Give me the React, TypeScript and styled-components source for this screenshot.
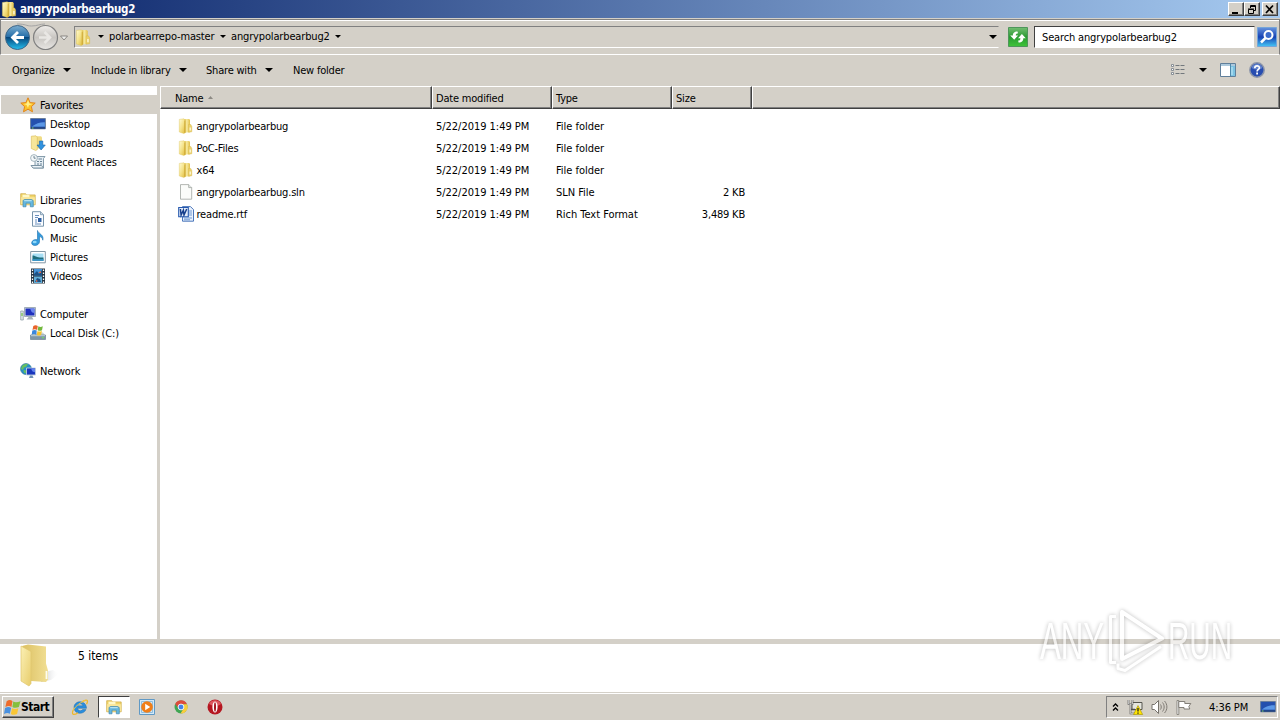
import React from 'react'
import styled, { createGlobalStyle } from 'styled-components'

interface FileEntry {
    name: string;
    type: string;
    size?: string;
    icon: React.ReactNode;
}

interface PlaceEntry {
    label: string;
    icon: React.ReactNode;
    root?: boolean;
    selected?: boolean;
    gap?: boolean;
}

const FolderIcon = ({ size = 16 }: { size?: number }) => (
    <svg width={size} height={size} viewBox="0 0 16 16">
        <defs>
            <linearGradient id="folderFront" x1="0" y1="0" x2="1" y2="1">
                <stop offset="0" stopColor="#fffad2" />
                <stop offset=".5" stopColor="#f4e288" />
                <stop offset="1" stopColor="#dfb93a" />
            </linearGradient>
            <linearGradient id="folderBack" x1="0" y1="0" x2="1" y2="0">
                <stop offset="0" stopColor="#d8b33c" />
                <stop offset=".5" stopColor="#f7eaa0" />
                <stop offset="1" stopColor="#e2c04a" />
            </linearGradient>
        </defs>
        <path d="M5.500 1h5.700l.8 1v12.200l-6.500.5z" fill="url(#folderBack)" />
        <path d="M10.500 6.500h2.300l1 2v5.300l-3.300.5z" fill="#ecd16a" stroke="#d5b54a" strokeWidth=".4" />
        <path d="M11.600 9.400h1.200v3h-1.200z" fill="#fffde8" />
        <path d="M1.300 1.400 6 .8l1.300 1.300v12.700l-1.500.7-4.500-1.500z" fill="url(#folderFront)" stroke="#dcc052" strokeWidth=".4" />
        <path d="M6.800 2.400v12.300" stroke="#c8a02c" strokeWidth=".8" />
    </svg>
)

const BigFolderIcon = () => (
    <svg width="40" height="44" viewBox="0 0 40 44">
        <defs>
            <linearGradient id="bigFront" x1="0" y1="0" x2="1" y2="1">
                <stop offset="0" stopColor="#fbf0b5" />
                <stop offset="1" stopColor="#e8cd6c" />
            </linearGradient>
            <linearGradient id="bigBack" x1="0" y1="0" x2="1" y2="0">
                <stop offset="0" stopColor="#dcc062" />
                <stop offset="1" stopColor="#f1df94" />
            </linearGradient>
            <linearGradient id="bigShade" x1="0" y1="0" x2="1" y2="0">
                <stop offset="0" stopColor="#8f9499" stopOpacity=".6" />
                <stop offset="1" stopColor="#ffffff" stopOpacity="0" />
            </linearGradient>
        </defs>
        <path d="m25 28 8-2 6 4-8 6-10 2z" fill="url(#bigShade)" />
        <path d="M2 2 8 .500 26 2.500v17l2 7v9l-2 2.500-15-1z" fill="url(#bigBack)" />
        <path d="M26.500 27v8" stroke="#fdfdf0" strokeWidth="1.800" />
        <path d="m1 2 10 5.500v32L9 42l-8-5z" fill="url(#bigFront)" stroke="#e0c66e" strokeWidth=".7" />
    </svg>
)

const StarIcon = () => (
    <svg width="16" height="16" viewBox="0 0 16 16">
        <path d="m8 .8 2.100 4.800 5.100.5-3.800 3.500 1.100 5.200L8 12.200l-4.500 2.600 1.100-5.200L.8 6.100l5.100-.5z" fill="#fcc22a" stroke="#e2861c" strokeWidth="1" strokeLinejoin="round" />
        <path d="m8 3 1.400 3.600 3.300.3-3.800 1.400L8 11 6.600 8 3.800 7l2.900-.4z" fill="#fff08a" />
    </svg>
)

const DesktopIcon = () => (
    <svg width="16" height="16" viewBox="0 0 16 16">
        <path d="M.6 2.500h14.800v10.300H.6z" fill="#2e62bd" stroke="#6b7f9c" />
        <path d="M1.200 3h13.600v4.500C9 6.500 5 8 1.200 11z" fill="#2450ae" />
        <path d="M2 10.500c4-3 8-4.500 12.800-4.300v4.300z" fill="#5c98e6" />
        <path d="M1 11.300h14v1.400H1z" fill="#1d3b74" />
        <path d="M2 12h1.500" stroke="#7fd36b" />
    </svg>
)

const DownloadsIcon = () => (
    <svg width="16" height="16" viewBox="0 0 16 16">
        <path d="M6 1.200h5l1 1v11.300H6z" fill="#f0dc86" />
        <path d="M1.300 1.200 6 .8l1.300 1.300v12.500l-1.600.9-4.400-2z" fill="#f8e79a" stroke="#d9ba55" strokeWidth=".6" />
        <path d="M9.400 6h3.400v4h2.500l-4.200 5L7 10h2.400z" fill="#2f92e0" stroke="#1767a8" strokeWidth=".6" />
    </svg>
)

const RecentIcon = () => (
    <svg width="16" height="16" viewBox="0 0 16 16">
        <path d="M5 2.500h10l-1.500 2v9.500H3.500l-1-2.500H5z" fill="#e4edf3" stroke="#7b93a3" strokeWidth=".9" />
        <path d="M8.500 5h3.500M7 7.500h2m1 0h2M7 10h2m1 0h2" stroke="#6a8497" strokeWidth="1.200" />
        <path d="M1 11.500h10.500l2 2.500H3z" fill="#eef4f8" stroke="#7b93a3" />
        <circle cx="4" cy="4" r="3.400" fill="#f4f8fa" stroke="#91a4af" strokeWidth=".8" />
        <path d="M4 2v2.200h1.700" stroke="#4e6878" strokeWidth=".8" fill="none" />
    </svg>
)

const LibraryIcon = () => (
    <svg width="16" height="16" viewBox="0 0 16 16">
        <path d="M.7 1.700h5l1 1.200h8.500v9.900H.7z" fill="#f0d56b" stroke="#cda942" strokeWidth=".7" />
        <path d="M2.500 2.700h7v3h-7z" fill="#fff8c8" />
        <path d="M1.100 5.200h13.800v7.100H1.100z" fill="#f9e69a" />
        <path d="M3 14.800V9.200C3 8 4 7.500 5 7.500h6c1.400 0 2.300.7 2.300 2v5.300h-3v-3.600H6v3.600z" fill="#65b7de" stroke="#4288ad" strokeWidth=".7" />
        <path d="M4.200 8.700h7.500" stroke="#c4ebf7" />
    </svg>
)

const DocumentIcon = () => (
    <svg width="16" height="16" viewBox="0 0 16 16">
        <path d="M2.500.7h8l3 3v11.500h-11z" fill="#fafcff" stroke="#7794ac" />
        <path d="M10.500.7v3h3" fill="#cad9e4" stroke="#7794ac" strokeWidth=".8" />
        <path d="M5 4.500h4M5 6.500h3M5 9h2M5 11h2M5 13h6" stroke="#6a8fbc" />
        <path d="M8 7h3.500v4H8z" fill="#2f60a3" />
    </svg>
)

const MusicIcon = () => (
    <svg width="16" height="16" viewBox="0 0 16 16">
        <path d="M7.500.5C8.500 4 14.300 4.600 12.800 10.200c-.3-2.500-1.900-3.300-3.300-3.600v5.200c-.2 2.200-2.200 3.700-4.600 3.700-2.200 0-3.500-1.400-3.200-3.100.4-2 3.200-3.500 5.800-2.500z" fill="#349bdd" stroke="#1c70ae" strokeWidth=".6" />
        <ellipse cx="4.700" cy="12" rx="2" ry="1.200" fill="#8ed8f9" />
    </svg>
)

const PictureIcon = () => (
    <svg width="16" height="16" viewBox="0 0 16 16">
        <path d="M.7 2.500h14.600v11.300H.7z" fill="#fff" stroke="#8397a5" />
        <path d="M2.500 4.500h11v7.300h-11z" fill="#a7def4" />
        <path d="M2.500 6.500c3 0 4 2.500 11 2v3.300h-11z" fill="#1e6d7c" />
        <path d="M2.500 10.200h11v1.600h-11z" fill="#3c99d0" />
    </svg>
)

const VideoIcon = () => (
    <svg width="16" height="16" viewBox="0 0 16 16">
        <path d="M1 .5h14v15H1z" fill="#263441" />
        <path d="M4 1h8v6.500H4z" fill="#4392d7" />
        <path d="M4 8.500h8V15H4z" fill="#62aed8" />
        <path d="m4 6 3-3 2 3 3-4v5.500H4zM5 14l2-4 3 1 1 3z" fill="#1d5185" />
        <path d="m8.500 5 2-2 .7 2zM6 12l2 1-2 1z" fill="#e9683c" />
        <path d="M2.500 1.500v14M13.500 1.500v14" stroke="#fff" strokeWidth="1.300" strokeDasharray="1.500 1.500" />
    </svg>
)

const ComputerIcon = () => (
    <svg width="16" height="16" viewBox="0 0 16 16">
        <path d="M.7 5h2.600v9H.7z" fill="#dce4e8" stroke="#8798a1" strokeWidth=".7" />
        <path d="M1.300 7h1.400v3H1.300z" fill="#7fc65c" />
        <path d="M4.500 1.500h11v9h-11z" fill="#d8dfe5" stroke="#8e9da8" strokeWidth=".8" />
        <path d="M5.500 2.500h9v7h-9z" fill="#1f30bd" />
        <path d="M10 2.500h4.500V7C11 7 11 4 10 2.500z" fill="#6c86ee" />
        <path d="M8.500 11h3.500l1.500 2.500H6.500z" fill="#a7b2ba" />
    </svg>
)

const FlagShape = ({ size = 16 }: { size?: number }) => (
    <svg width={size} height={size} viewBox="0 0 16 16">
        <path d="M2.500 2C5 .5 6.500 1 8 2L7 7.500C5.500 6.500 4 6.300 1.300 7.500z" fill="#ee6b2b" />
        <path d="M8.700 2.300C10.500 3.500 13 3 15.500 2l-1.500 5.500c-2 1-4.300 1.100-6.100 0z" fill="#85bf3e" />
        <path d="M1 8.500C3.500 7.200 5 7.300 6.700 8.400l-1.200 5.500C4 13 2.500 12.800 0 14z" fill="#4a91df" />
        <path d="M7.600 8.700c1.800 1 4 1 5.900 0l-1.200 5.500c-2 1-4.200 1-5.900-.2z" fill="#fac634" />
    </svg>
)

const DiskIcon = () => (
    <svg width="16" height="16" viewBox="0 0 16 16">
        <path d="m2 9 2-1.500h9l2 2.500H1z" fill="#c9d3d8" />
        <path d="M.5 10h15v4.500H.5z" fill="#7e96a6" stroke="#6d8494" strokeWidth=".7" />
        <path d="M1 10.700h14" stroke="#c2d3de" />
        <path d="M12 12.700h2" stroke="#70e35e" />
        <path d="M3.300.9c1.600-1 3.300-.8 4.500.1l-.7 4C5.700 4.100 4.200 4 2.500 4.900z" fill="#e9652c" />
        <path d="M8.400 1.200c1.400.9 2.700.9 4.400 0l-.8 4c-1.600.9-3 .8-4.300 0z" fill="#72b83c" />
        <path d="M2.300 5.600c1.700-.9 3.100-.9 4.500 0l-.7 4.100c-1.400-.9-2.700-.9-4.400 0z" fill="#3a87dc" />
        <path d="M7.500 5.900c1.400.9 2.700.9 4.400 0l-.8 4c-1.600.9-3 .9-4.300 0z" fill="#f7c32c" />
    </svg>
)

const NetworkIcon = () => (
    <svg width="16" height="16" viewBox="0 0 16 16">
        <circle cx="6" cy="6" r="5.500" fill="#268fc8" stroke="#38758e" strokeWidth=".6" />
        <path d="M2 3c2-2 4-2.300 6-1.700L6 4l-2 .5L3 7 1 6zM3.500 7l3 .5-1 3C4 10 3.500 9 3.500 7z" fill="#66bf60" />
        <path d="M6.500 5h9v7h-9z" fill="#1936bd" stroke="#c0cede" strokeWidth=".9" />
        <path d="M11 5.500h4v3.700c-3 0-3-2-4-3.700z" fill="#6182ed" />
        <path d="M10 12.500h2.500l1 2.500H9z" fill="#7293b5" />
    </svg>
)

const FileIcon = () => (
    <svg width="16" height="16" viewBox="0 0 16 16">
        <path d="M2.500.6h8.200l3 3v11.600H2.500z" fill="#fbfcfa" stroke="#a0a5a0" strokeWidth=".8" />
        <path d="M10.700.6v3h3" fill="#e7ebe8" stroke="#a0a5a0" strokeWidth=".8" />
    </svg>
)

const WordIcon = () => (
    <svg width="16" height="16" viewBox="0 0 16 16">
        <path d="M4.500.6h8l3 3v11.600h-11z" fill="#e9f1fc" stroke="#3968b3" strokeWidth=".9" />
        <path d="M10.500 5h3.500m-3.500 2H14m-3.500 2H14m-8 3h8m-8 1.800h6" stroke="#6390ce" strokeWidth=".9" />
        <path d="M.7 1.500h9.600v9.300H.7z" fill="#e4edfa" stroke="#2759ae" strokeWidth="1.100" />
        <path d="m2.400 3 .7 6L5.400 4.200l.6 4.800L8.700 3" fill="none" stroke="#173f8c" strokeWidth="1.500" />
    </svg>
)

const BackForward = () => (
    <svg width="66" height="30" viewBox="0 0 66 30">
        <defs>
            <linearGradient id="backFill" x1="0" y1="0" x2="0" y2="1">
                <stop offset="0" stopColor="#7badd0" />
                <stop offset=".48" stopColor="#246da8" />
                <stop offset=".5" stopColor="#07477d" />
                <stop offset="1" stopColor="#25c0ef" />
            </linearGradient>
            <linearGradient id="forwardFill" x1="0" y1="0" x2="0" y2="1">
                <stop offset="0" stopColor="#f0eeeb" />
                <stop offset=".5" stopColor="#c8c5c1" />
                <stop offset="1" stopColor="#e8e6e3" />
            </linearGradient>
        </defs>
        <path d="M14 2c9 0 9 2 14.500 2S37 2 42 2" fill="none" stroke="#a4a4a4" />
        <circle cx="14.500" cy="15.500" r="12" fill="url(#backFill)" stroke="#3f6687" />
        <path d="M15 10 9.500 15.500 15 21M10 15.500h11" fill="none" stroke="#fff" strokeWidth="2.800" />
        <circle cx="42.500" cy="15.500" r="12" fill="url(#forwardFill)" stroke="#808080" strokeWidth="1.200" />
        <path d="m41.500 10 5.500 5.500-5.500 5.500M46.500 15.500H36" fill="none" stroke="#e9e7e4" strokeWidth="2.500" />
        <path d="M57.500 14h7L61 18z" fill="#efefed" stroke="#73716d" strokeWidth=".8" />
    </svg>
)

const RefreshIcon = () => (
    <svg width="20" height="20" viewBox="0 0 20 20">
        <defs>
            <linearGradient id="refreshFill" x1="0" y1="0" x2="0" y2="1">
                <stop offset="0" stopColor="#74bd73" />
                <stop offset=".5" stopColor="#299b32" />
                <stop offset="1" stopColor="#3fc439" />
            </linearGradient>
        </defs>
        <path d="M.5.500h19v19H.5z" fill="url(#refreshFill)" stroke="#4e965b" />
        <path d="M9.500 4.500C6 4.500 4.800 6.500 4.900 8.500H2.200l4 4.200 3.900-4.200H7.800c0-1.300.5-2 2.200-2.200z" fill="#fff" />
        <path d="M10.500 15.500c3.800 0 4.900-2.200 4.800-4.300h2.500L13.900 7 10 11.200h2.400c0 1.500-.4 2.200-2.200 2.400z" fill="#fff" />
    </svg>
)

const SearchIcon = () => (
    <svg width="20" height="20" viewBox="0 0 20 20">
        <defs>
            <linearGradient id="searchFill" x1="0" y1="0" x2="0" y2="1">
                <stop offset="0" stopColor="#6693dd" />
                <stop offset=".5" stopColor="#1742b4" />
                <stop offset="1" stopColor="#45c6f5" />
            </linearGradient>
        </defs>
        <path d="M.5.500h19v19H.5z" fill="url(#searchFill)" stroke="#76a5d8" />
        <circle cx="11.500" cy="8" r="4" fill="#3b6bcb" stroke="#fff" strokeWidth="2" />
        <path d="m8.500 11-4.500 4.500" stroke="#fff" strokeWidth="2.500" />
    </svg>
)

const ViewIcon = () => (
    <svg width="16" height="14" viewBox="0 0 16 14">
        <path d="M1.500 1.500h2v2h-2zM1.500 5.500h2v2h-2zM1.500 9.500h2v2h-2z" fill="#fff" stroke="#7d858c" strokeWidth=".9" />
        <path d="M5.500 2.500h4m1 0h4m-9 4h4m1 0h4m-9 4h4m1 0h4" stroke="#72787d" />
    </svg>
)

const PaneIcon = () => (
    <svg width="16" height="14" viewBox="0 0 16 14">
        <path d="M.5.500h15v13H.5z" fill="#fff" stroke="#607f9a" />
        <path d="M1 1h14v2H1z" fill="#acc9dd" />
        <path d="M10 3h5v10h-5z" fill="#7cc3e2" />
        <path d="M10.500 1v12" stroke="#4d88ab" />
        <path d="M12 4v8" stroke="#c8edfa" />
    </svg>
)

const HelpIcon = () => (
    <svg width="16" height="16" viewBox="0 0 16 16">
        <circle cx="8" cy="8" r="7.200" fill="#284db0" stroke="#8d96aa" strokeWidth="1.500" />
        <path d="M2.500 6a5.800 5.800 0 0 1 11 0C10 8 6 8 2.500 6z" fill="#6282cc" />
        <path d="M5.800 6.200c0-3 4.600-2.900 4.600-.3 0 1.500-2.300 1.600-2.300 3.500" stroke="#fff" strokeWidth="1.700" fill="none" />
        <path d="M7.200 10.600H9v1.800H7.200z" fill="#fff" />
    </svg>
)

const IeIcon = () => (
    <svg width="18" height="18" viewBox="0 0 18 18">
        <path d="M15.500 10.300H6.500c.3 2.700 3.900 3.100 5.100 1.300H15C12.800 17 3 16.500 3 9.500 3 2 15.300 1.500 15.500 10.300zM6.600 7.800H12c-.3-2.600-5-2.500-5.400 0z" fill="#2a8ede" stroke="#1d6cac" strokeWidth=".5" fillRule="evenodd" />
        <path d="M3 10.500c-3.500 6.500-.4 7.200 4 4.200M11 3.800c5-3.400 6.700-1.500 4.500 2.500" fill="none" stroke="#eeb82d" strokeWidth="1.300" />
        <path d="M2.200 12C5 7.500 9.500 4.500 14.500 2.300" stroke="#f4c948" fill="none" />
    </svg>
)

const PlayerIcon = () => (
    <svg width="16" height="16" viewBox="0 0 16 16">
        <path d="M.5.500h15v15H.5z" fill="#d2e9f9" stroke="#6099c5" />
        <path d="M2.500 2.500h11v11h-11z" fill="none" stroke="#8fbddd" />
        <circle cx="8" cy="8" r="5.800" fill="#f07e19" />
        <path d="m6.200 4.700 5 3.300-5 3.300z" fill="#fff" />
    </svg>
)

const ChromeIcon = () => (
    <svg width="14" height="14" viewBox="0 0 14 14">
        <circle cx="7" cy="7" r="6.500" fill="#3fa553" />
        <path d="M1.200 4A6.500 6.500 0 0 1 13 4.200H7L4.500 8.300z" fill="#dd4b3c" />
        <path d="M13 4.200A6.500 6.500 0 0 1 6.500 13.500L9.600 8.500 8.500 4.200z" fill="#f9cd3d" />
        <circle cx="7" cy="7" r="2.900" fill="#4381e8" stroke="#fff" strokeWidth=".9" />
    </svg>
)

const OperaIcon = () => (
    <svg width="16" height="16" viewBox="0 0 16 16">
        <circle cx="8" cy="8" r="7.500" fill="#b51721" />
        <path d="M2 5a6.700 6.700 0 0 1 12 0C11 7.500 6 7.500 2 5z" fill="#dd5860" />
        <ellipse cx="8" cy="8" rx="2.600" ry="5.500" fill="#fff" />
        <ellipse cx="8" cy="8" rx="1" ry="4.700" fill="#a21620" />
    </svg>
)

const TrayNetworkIcon = () => (
    <svg width="16" height="16" viewBox="0 0 16 16">
        <path d="M5 3.500h10v7H5z" fill="#e5e5df" stroke="#55554f" />
        <path d="M1.500 1v4h4V1M3.500 5v9.500h5M3.500 10.500H8" fill="none" stroke="#4d4d4d" strokeWidth="1.600" />
        <path d="M1.500 1v4h4V1M3.500 5v9.500h5" fill="none" stroke="#fff" strokeWidth=".6" />
        <path d="m11 6.500 4.700 9H6.500z" fill="#ffe500" stroke="#a28e00" strokeWidth=".6" />
        <path d="M11 9v3.500m0 1v1.200" stroke="#222" strokeWidth="1.300" />
    </svg>
)

const SpeakerIcon = () => (
    <svg width="17" height="16" viewBox="0 0 17 16">
        <path d="M1 5.500h2.500l4-4v13l-4-4H1z" fill="#fff" stroke="#77736c" />
        <path d="M9.500 5.500c1 1.500 1 3.500 0 5m2-7c2.200 2.700 2.200 6.300 0 9m2-10.500c3.200 3.500 3.200 8.500 0 12" fill="none" stroke="#77736c" strokeWidth=".9" />
    </svg>
)

const ActionIcon = () => (
    <svg width="16" height="16" viewBox="0 0 16 16">
        <path d="M1 1.500h1.800v14H1z" fill="#fff" stroke="#77736c" strokeWidth=".8" />
        <path d="M2.800 2.500h6v2h6l-2 3 1 2.500H8v-1.500H2.800z" fill="#fff" stroke="#77736c" strokeWidth=".9" />
    </svg>
)

const Caret = ({ size = 8 }: { size?: number }) => (
    <svg width={size} height={size / 2} viewBox="0 0 8 4">
        <path d="M0 0h8L4 4z" fill="#000" />
    </svg>
)

const WatermarkMark = () => (
    <svg width="206" height="76" viewBox="0 0 206 76">
        <g fill="#ffffff" fontFamily="'Liberation Sans Narrow', 'Liberation Sans', sans-serif" fontSize="51">
            <text x="6" y="56" textLength="64" lengthAdjust="spacingAndGlyphs">ANY</text>
            <text x="134" y="56" textLength="64" lengthAdjust="spacingAndGlyphs">RUN</text>
        </g>
        <g fill="none" stroke="#fff" strokeWidth="4" strokeLinejoin="round">
            <path d="M88 9v47l40-20.500z" />
            <path d="M82 13.500h-5.500v46H82M84 60.500v5l7 2 36-24" strokeWidth="3" />
        </g>
    </svg>
)

const files: FileEntry[] = [
    { name: 'angrypolarbearbug', type: 'File folder', icon: <FolderIcon /> },
    { name: 'PoC-Files', type: 'File folder', icon: <FolderIcon /> },
    { name: 'x64', type: 'File folder', icon: <FolderIcon /> },
    { name: 'angrypolarbearbug.sln', type: 'SLN File', size: '2 KB', icon: <FileIcon /> },
    { name: 'readme.rtf', type: 'Rich Text Format', size: '3,489 KB', icon: <WordIcon /> },
]

const places: PlaceEntry[] = [
    { label: 'Favorites', icon: <StarIcon />, root: true, selected: true },
    { label: 'Desktop', icon: <DesktopIcon /> },
    { label: 'Downloads', icon: <DownloadsIcon /> },
    { label: 'Recent Places', icon: <RecentIcon /> },
    { label: 'Libraries', icon: <LibraryIcon />, root: true, gap: true },
    { label: 'Documents', icon: <DocumentIcon /> },
    { label: 'Music', icon: <MusicIcon /> },
    { label: 'Pictures', icon: <PictureIcon /> },
    { label: 'Videos', icon: <VideoIcon /> },
    { label: 'Computer', icon: <ComputerIcon />, root: true, gap: true },
    { label: 'Local Disk (C:)', icon: <DiskIcon /> },
    { label: 'Network', icon: <NetworkIcon />, root: true, gap: true },
]

const App = () => {
    return (
        <React.Fragment>
            <GlobalStyle />
            <Screen>
                <TitleBar>
                    <FolderIcon size={17} />
                    <TitleText>angrypolarbearbug2</TitleText>
                    <WindowButton aria-label="Minimize">
                        <svg width="10" height="9"><path d="M1 7h6v2H1z" /></svg>
                    </WindowButton>
                    <WindowButton aria-label="Restore">
                        <svg width="10" height="9" fill="none" stroke="#000">
                            <path d="M3.500 3V.500h5v5H7M3 1.500h6M1.500 4.500h5v4h-5zM1 4h6" />
                        </svg>
                    </WindowButton>
                    <WindowButton aria-label="Close" $gap={2}>
                        <svg width="10" height="9"><path d="m1 .5 7 7.500M8 .5 1 8" stroke="#000" strokeWidth="1.700" /></svg>
                    </WindowButton>
                </TitleBar>
                <NavBar>
                    <BackForward />
                    <AddressBox>
                        <FolderIcon size={17} />
                        <Crumbs>
                            <Caret size={6} />
                            <Label $width={106}>polarbearrepo-master</Label>
                            <Caret size={6} />
                            <Label $width={99}>angrypolarbearbug2</Label>
                            <Caret size={6} />
                        </Crumbs>
                        <Caret />
                    </AddressBox>
                    <RefreshIcon />
                    <SearchBox>Search angrypolarbearbug2</SearchBox>
                    <SearchIcon />
                </NavBar>
                <CommandBar>
                    <Command $width={79}>Organize <Caret /></Command>
                    <Command $width={115}>Include in library <Caret /></Command>
                    <Command $width={87}>Share with <Caret /></Command>
                    <Command>New folder</Command>
                    <CommandTools>
                        <ViewIcon />
                        <Caret />
                        <PaneIcon />
                        <HelpIcon />
                    </CommandTools>
                </CommandBar>
                <Body>
                    <Sidebar>
                        {places.map((place) => (
                            <Place key={place.label} $root={place.root} $selected={place.selected} $gap={place.gap}>
                                {place.icon}
                                <PlaceLabel>{place.label}</PlaceLabel>
                            </Place>
                        ))}
                    </Sidebar>
                    <FilePane>
                        <HeaderRow>
                            <HeaderCell $pad={14}>
                                Name
                                <svg width="6" height="4"><path d="M0 3h5L2.500 0z" fill="#8c8983" /></svg>
                            </HeaderCell>
                            <HeaderCell>Date modified</HeaderCell>
                            <HeaderCell>Type</HeaderCell>
                            <HeaderCell>Size</HeaderCell>
                            <HeaderCell />
                        </HeaderRow>
                        <FileList>
                            {files.map((file) => (
                                <FileRow key={file.name}>
                                    <FileName>{file.icon}{file.name}</FileName>
                                    <FileInfo>5/22/2019 1:49 PM</FileInfo>
                                    <FileInfo>{file.type}</FileInfo>
                                    <SizeCell>{file.size}</SizeCell>
                                </FileRow>
                            ))}
                        </FileList>
                    </FilePane>
                </Body>
                <DetailsPane>
                    <BigFolderIcon />
                    <ItemCount>5 items</ItemCount>
                </DetailsPane>
                <Taskbar>
                    <StartButton><FlagShape size={17} />Start</StartButton>
                    <QuickItem><IeIcon /></QuickItem>
                    <QuickItem $active><LibraryIcon /></QuickItem>
                    <QuickItem><PlayerIcon /></QuickItem>
                    <QuickItem><ChromeIcon /></QuickItem>
                    <QuickItem><OperaIcon /></QuickItem>
                    <Tray>
                        <svg width="7" height="9" fill="none" stroke="#000" strokeWidth="1.300">
                            <path d="m1 3.500 2.500-2.500L6 3.500M1 7.500 3.500 5 6 7.500" />
                        </svg>
                        <TrayNetworkIcon />
                        <SpeakerIcon />
                        <ActionIcon />
                        <Clock>4:36 PM</Clock>
                        <DesktopIcon />
                    </Tray>
                </Taskbar>
                <Watermark><WatermarkMark /></Watermark>
            </Screen>
        </React.Fragment>
    );
}

export default App


const GlobalStyle = createGlobalStyle`
    body {
        margin: 0;
        overflow: hidden;
        background: #d4d0c8;
        color: #000;
        font-family: 'DejaVu Sans Condensed', 'DejaVu Sans', sans-serif;
        font-stretch: condensed;
        font-size: 11px;
        letter-spacing: -0.2px;
    }
    *, *::before, *::after {
        box-sizing: border-box;
    }
    svg {
        flex: none;
        display: block;
        overflow: visible;
    }
`;

const Screen = styled.div`
    position: relative;
    width: 1280px;
    height: 720px;
    display: flex;
    flex-direction: column;
    white-space: nowrap;
    overflow: hidden;
`;

const TitleBar = styled.div`
    height: 18px;
    flex: none;
    display: flex;
    align-items: center;
    padding: 0 2px 0 1px;
    background: linear-gradient(90deg, #0a246a, #a6caf0);
`;

const TitleText = styled.div`
    flex: 1;
    margin-left: 2px;
    color: #fff;
    font-size: 11.5px;
    font-weight: bold;
    letter-spacing: -0.25px;
`;

const WindowButton = styled.button<{ $gap?: number }>`
    width: 16px;
    height: 14px;
    margin: 0 0 0 ${({ $gap }) => $gap || 0}px;
    padding: 1px 2px;
    background: #d4d0c8;
    border: 1px solid;
    border-color: #fff #404040 #404040 #fff;
    box-shadow: inset -1px -1px #808080;
`;

const NavBar = styled.div`
    height: 36px;
    flex: none;
    margin-top: 1px;
    display: flex;
    align-items: center;
    padding: 0 2px;
    border: 1px solid;
    border-color: #808080 #808080 #fff #808080;
    box-shadow: inset 0 1px #fff;
`;

const AddressBox = styled.div`
    flex: 1;
    height: 22px;
    margin: 0 9px 0 5px;
    padding-right: 1px;
    display: flex;
    align-items: center;
    border: 1px solid;
    border-color: #808080 transparent #fff #808080;
`;

const Crumbs = styled.div`
    flex: 1;
    display: flex;
    align-items: center;
    gap: 5px;
    margin: -1px 0 0 6px;
`;

const Label = styled.span<{ $width?: number }>`
    width: ${({ $width }) => ($width ? `${$width}px` : 'auto')};
    letter-spacing: -0.15px;
`;

const SearchBox = styled.div`
    width: 221px;
    height: 22px;
    margin: 0 2px 0 6px;
    padding-left: 7px;
    line-height: 21px;
    letter-spacing: -0.15px;
    background: #fff;
    border: 1px solid;
    border-color: #404040 #d4d0c8 #fff #404040;
`;

const CommandBar = styled.div`
    height: 31px;
    flex: none;
    display: flex;
    align-items: center;
    padding: 0 15px 1px 12px;
`;

const Command = styled.div<{ $width?: number }>`
    width: ${({ $width }) => ($width ? `${$width}px` : 'auto')};
    display: flex;
    align-items: center;
    gap: 8px;
`;

const CommandTools = styled.div`
    margin-left: auto;
    display: flex;
    align-items: center;
    gap: 13px;
`;

const Body = styled.div`
    height: 553px;
    flex: none;
    display: flex;
`;

const Sidebar = styled.div`
    width: 160px;
    padding-top: 9px;
    padding-left: 1px;
    background: #fff;
    border-right: 3px solid #d4d0c8;
`;

const Place = styled.div<{ $root?: boolean; $selected?: boolean; $gap?: boolean }>`
    height: 19px;
    display: flex;
    align-items: center;
    gap: 4px;
    margin-top: ${({ $gap }) => ($gap ? 19 : 0)}px;
    padding-left: ${({ $root }) => ($root ? 19 : 29)}px;
    background: ${({ $selected }) => ($selected ? '#d4d0c8' : 'transparent')};
`;

const PlaceLabel = styled.span`
    padding-top: 2px;
    letter-spacing: -0.15px;
`;

const FilePane = styled.div`
    flex: 1;
    background: #fff;
`;

const HeaderRow = styled.div`
    height: 23px;
    display: grid;
    grid-template-columns: 272px 120px 120px 80px 1fr;
`;

const HeaderCell = styled.div<{ $pad?: number }>`
    display: flex;
    align-items: center;
    gap: 5px;
    padding: 1px 0 0 ${({ $pad }) => $pad || 3}px;
    background: #d4d0c8;
    border: 1px solid;
    border-color: #fff #404040 #404040 #fff;
    box-shadow: inset -1px -1px #808080;
`;

const FileList = styled.div`
    padding-top: 6px;
`;

const FileRow = styled.div`
    height: 22px;
    display: grid;
    grid-template-columns: 276px 120px 116px 73px;
    align-items: center;
`;

const FileName = styled.div`
    display: flex;
    align-items: center;
    gap: 2.5px;
    padding-left: 18px;
`;

const FileInfo = styled.span`
    letter-spacing: -0.03px;
`;

const SizeCell = styled.span`
    text-align: right;
`;

const DetailsPane = styled.div`
    height: 53px;
    flex: none;
    display: flex;
    padding-left: 20px;
    background: #fff;
    border-top: 5px solid #d4d0c8;
`;

const ItemCount = styled.div`
    margin: 5px 0 0 18px;
    font-size: 12px;
    letter-spacing: -0.05px;
`;

const Taskbar = styled.div`
    height: 28px;
    flex: none;
    display: flex;
    align-items: center;
    padding: 1px 2px 0;
    border-top: 1px solid #d4d0c8;
    box-shadow: inset 0 1px #fff;
`;

const StartButton = styled.button`
    width: 52px;
    height: 22px;
    margin-right: 10px;
    padding: 0 0 0 1px;
    display: flex;
    align-items: center;
    font: bold 12px 'DejaVu Sans Condensed', 'DejaVu Sans', sans-serif;
    letter-spacing: -0.5px;
    background: #d4d0c8;
    border: 1px solid;
    border-color: #fff #404040 #404040 #fff;
    box-shadow: inset -1px -1px #808080;
`;

const QuickItem = styled.div<{ $active?: boolean }>`
    width: 32px;
    height: 22px;
    margin-right: 1.7px;
    display: flex;
    align-items: center;
    justify-content: center;
    background: ${({ $active }) => ($active ? '#fff' : 'transparent')};
    border: 1px solid;
    border-color: ${({ $active }) => ($active ? '#404040 #fff #fff #404040' : 'transparent')};
`;

const Tray = styled.div`
    width: 172px;
    height: 22px;
    margin-left: auto;
    padding: 0 0 0 5px;
    display: flex;
    align-items: center;
    gap: 8px;
    border: 1px solid;
    border-color: #808080 #fff #fff #808080;
`;

const Clock = styled.div`
    width: 43px;
    margin-left: 9px;
    letter-spacing: -0.1px;
`;

const Watermark = styled.div`
    position: absolute;
    left: 1034px;
    top: 603px;
    opacity: 0.65;
    filter: drop-shadow(0 0 2px rgba(0, 0, 0, 0.4));
`;
